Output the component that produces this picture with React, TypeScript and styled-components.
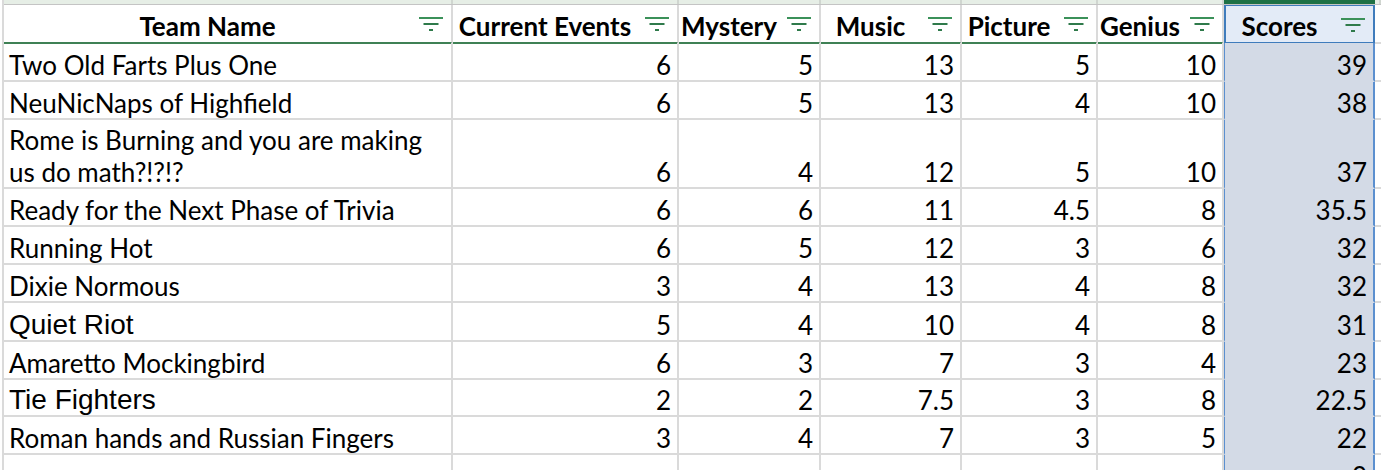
import React from 'react';
import styled, { createGlobalStyle } from 'styled-components';

const GRID = '#dadada';
const SEL_BLUE = '#3f7cbc';
const CALIBRI = `Lato, "Open Sans", sans-serif`;
const ARIAL = `"Liberation Sans", Arial, sans-serif`;

const Global = createGlobalStyle`
  html, body {
    margin: 0;
    padding: 0;
    background: #ffffff;
    width: 1381px;
    height: 470px;
    overflow: hidden;
  }
  * { box-sizing: border-box; }
`;

const COLUMNS = '449px 226px 142px 141px 136px 126px 151px 1fr';

const Sheet = styled.div`
  margin-left: 2px;
  border-left: 2px solid ${GRID};
  height: 470px;
  overflow: hidden;
  font-family: ${CALIBRI};
  color: #000;
`;

const Strip = styled.div`
  display: grid;
  grid-template-columns: ${COLUMNS};
  height: 5px;
  border-bottom: 1px solid #c4c4c4;
`;

const StripCell = styled.div<{ $active?: boolean }>`
  background: ${(p) => (p.$active ? '#1e7145' : '#e6eee6')};
  border-right: 2px solid ${(p) => (p.$active ? '#1e7145' : '#d0d6d0')};
`;

const Row = styled.div<{ $h: number }>`
  display: grid;
  grid-template-columns: ${COLUMNS};
  height: ${(p) => p.$h}px;
`;

const HeaderCell = styled.div<{ $selected?: boolean }>`
  display: flex;
  align-items: center;
  font-weight: 700;
  font-size: 26px;
  line-height: 32px;
  background: ${(p) => (p.$selected ? '#e3ebf7' : '#ffffff')};
  border-right: 2px solid ${(p) => (p.$selected ? SEL_BLUE : GRID)};
  border-bottom: 2px solid ${(p) => (p.$selected ? SEL_BLUE : '#3f8155')};
  border-left: ${(p) => (p.$selected ? `2px solid ${SEL_BLUE}` : 'none')};
  border-top: ${(p) => (p.$selected ? `1px solid ${SEL_BLUE}` : 'none')};
  white-space: nowrap;
`;

const HeaderLabel = styled.span`
  flex: 1;
  text-align: center;
  padding-top: 4px;
`;

const FilterButton = styled.span`
  width: 40px;
  flex: none;
  display: flex;
  align-items: center;
  justify-content: flex-end;
  padding-right: 8px;
  margin-top: 1px;
`;

const Cell = styled.div`
  display: flex;
  align-items: flex-end;
  border-right: 2px solid ${GRID};
  border-bottom: 2px solid ${GRID};
  font-size: 26px;
  line-height: 30px;
  padding: 0 6px 0 5px;
  white-space: nowrap;
`;

const NameCell = styled(Cell)<{ $arial?: boolean }>`
  flex-direction: column;
  align-items: flex-start;
  justify-content: flex-end;
  gap: 2px;
  font-family: ${(p) => (p.$arial ? ARIAL : CALIBRI)};
  font-size: ${(p) => (p.$arial ? '28px' : '26px')};
`;

const NameLine = styled.span`
  display: block;
  line-height: 30px;
`;

const NumCell = styled(Cell)`
  justify-content: flex-end;
`;

const ScoreCell = styled(NumCell)`
  background: #d3dae6;
  border-left: 1px solid #5b8fcf;
  border-right: 2px solid #5b8fcf;
  border-bottom: 2px solid #d3dae6;
`;

const FilterIcon = () => (
  <svg width="24" height="14" viewBox="0 0 24 14" aria-hidden>
    <rect x="0" y="0" width="24" height="2" fill="#3b9159" />
    <rect x="4.5" y="6" width="15" height="2" fill="#2f7a4b" />
    <rect x="10" y="12" width="4" height="2" fill="#2f7a4b" />
  </svg>
);

type Team = {
  name: string[];
  arial?: boolean;
  vals: (string | number)[];
  score: string | number;
  h: number;
};

const teams: Team[] = [
  { name: ['Two Old Farts Plus One'], vals: [6, 5, 13, 5, 10], score: 39, h: 39 },
  { name: ['NeuNicNaps of Highfield'], vals: [6, 5, 13, 4, 10], score: 38, h: 38 },
  { name: ['Rome is Burning and you are making', 'us do math?!?!?'], vals: [6, 4, 12, 5, 10], score: 37, h: 69 },
  { name: ['Ready for the Next Phase of Trivia'], vals: [6, 6, 11, '4.5', 8], score: '35.5', h: 38 },
  { name: ['Running Hot'], vals: [6, 5, 12, 3, 6], score: 32, h: 38 },
  { name: ['Dixie Normous'], vals: [3, 4, 13, 4, 8], score: 32, h: 38 },
  { name: ['Quiet Riot'], arial: true, vals: [5, 4, 10, 4, 8], score: 31, h: 39 },
  { name: ['Amaretto Mockingbird'], vals: [6, 3, 7, 3, 4], score: 23, h: 38 },
  { name: ['Tie Fighters'], arial: true, vals: [2, 2, '7.5', 3, 8], score: '22.5', h: 37 },
  { name: ['Roman hands and Russian Fingers'], vals: [3, 4, 7, 3, 5], score: 22, h: 38 },
  { name: [''], vals: ['', '', '', '', ''], score: 0, h: 38 },
];

const headers = ['Team Name', 'Current Events', 'Mystery', 'Music', 'Picture', 'Genius', 'Scores'];

export default function App() {
  return (
    <>
      <Global />
      <Sheet>
        <Strip>
          {headers.map((h) => (
            <StripCell key={h} $active={h === 'Scores'} />
          ))}
          <StripCell />
        </Strip>
        <Row $h={38}>
          {headers.map((h) => (
            <HeaderCell key={h} $selected={h === 'Scores'}>
              <HeaderLabel>{h}</HeaderLabel>
              <FilterButton>
                <FilterIcon />
              </FilterButton>
            </HeaderCell>
          ))}
          <Cell />
        </Row>
        {teams.map((t, i) => (
          <Row key={i} $h={t.h}>
            <NameCell $arial={t.arial}>
              {t.name.map((line, j) => (
                <NameLine key={j}>{line}</NameLine>
              ))}
            </NameCell>
            {t.vals.map((v, j) => (
              <NumCell key={j}>{v}</NumCell>
            ))}
            <ScoreCell>{t.score}</ScoreCell>
            <Cell />
          </Row>
        ))}
      </Sheet>
    </>
  );
}
